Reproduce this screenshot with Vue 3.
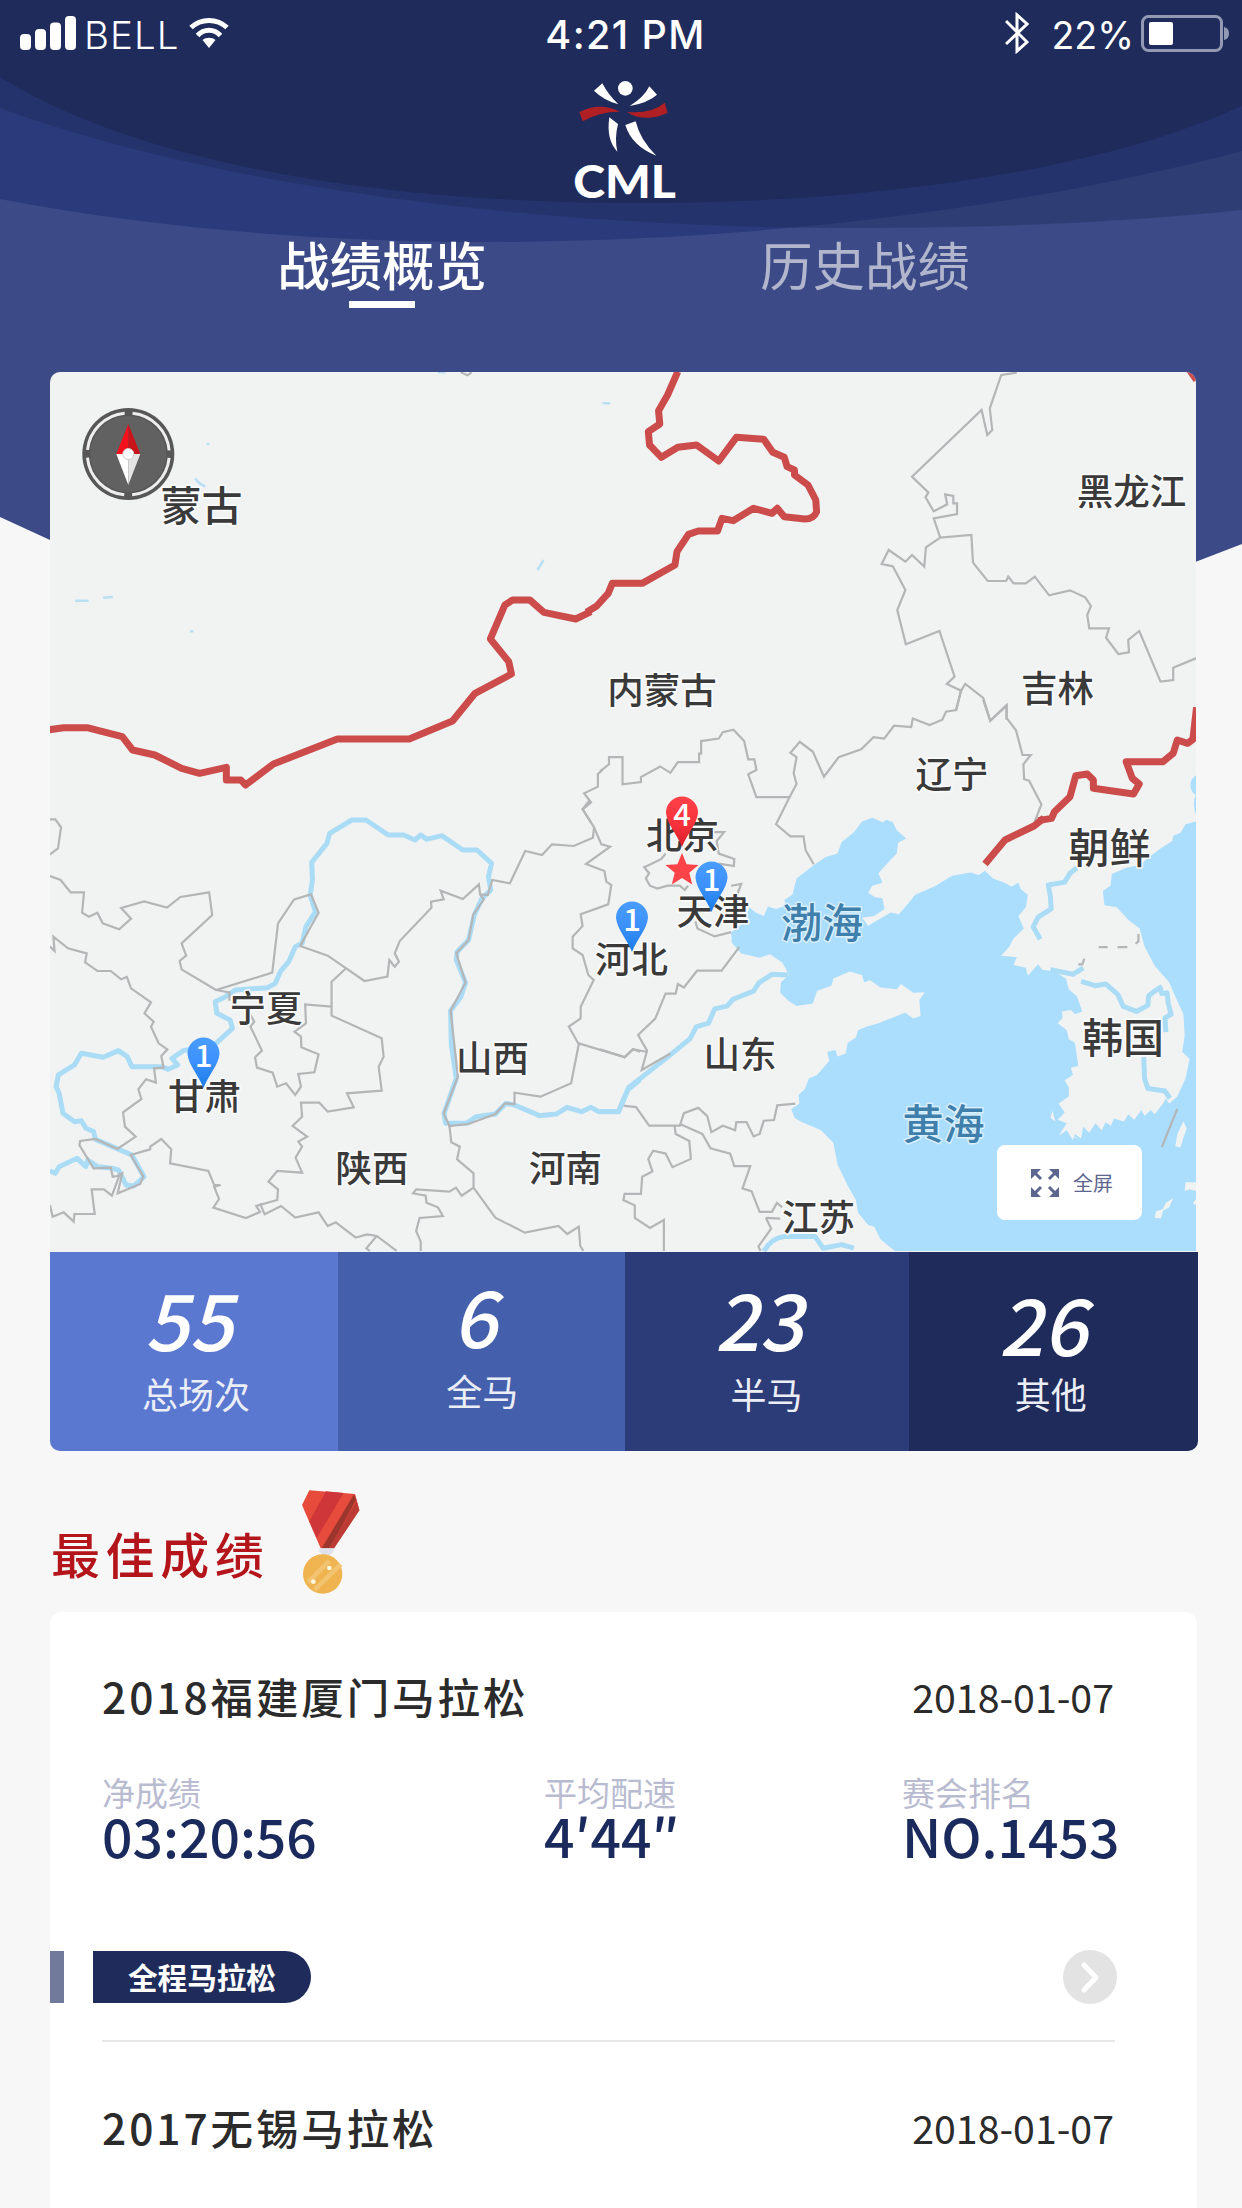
<script setup>
const labels = [
  { t: '蒙古', x: 201.5, y: 505.5, s: 41 },
  { t: '黑龙江', x: 1131.5, y: 491, s: 36.5 },
  { t: '内蒙古', x: 662, y: 690, s: 36.5 },
  { t: '吉林', x: 1057.5, y: 688, s: 36.5 },
  { t: '辽宁', x: 952, y: 774.5, s: 36.5 },
  { t: '北京', x: 682.5, y: 835, s: 36.5 },
  { t: '天津', x: 713, y: 911.5, s: 36.5 },
  { t: '河北', x: 631.5, y: 959, s: 36.5 },
  { t: '渤海', x: 822, y: 922.5, s: 41, c: 'sea' },
  { t: '朝鲜', x: 1109.5, y: 848, s: 41 },
  { t: '韩国', x: 1123, y: 1038, s: 41 },
  { t: '山东', x: 740, y: 1054.5, s: 36.5 },
  { t: '黄海', x: 943.5, y: 1123.5, s: 41, c: 'sea' },
  { t: '江苏', x: 818.5, y: 1217.5, s: 36.5 },
  { t: '宁夏', x: 266, y: 1008, s: 36.5 },
  { t: '甘肃', x: 204.5, y: 1096, s: 36.5 },
  { t: '山西', x: 492.5, y: 1058, s: 36.5 },
  { t: '陕西', x: 372, y: 1168, s: 36.5 },
  { t: '河南', x: 565.5, y: 1168, s: 36.5 },
]

const pins = [
  { n: 4, x: 682, y: 812, fill: 'url(#pinRed)' },
  { n: 1, x: 711.5, y: 877, fill: 'url(#pinBlue)' },
  { n: 1, x: 632, y: 917, fill: 'url(#pinBlue)' },
  { n: 1, x: 203.5, y: 1053, fill: 'url(#pinBlue)' },
]

const stats = [
  { value: '55', label: '总场次', cls: 'total' },
  { value: '6', label: '全马', cls: 'full' },
  { value: '23', label: '半马', cls: 'half' },
  { value: '26', label: '其他', cls: 'other' },
]
</script>

<template>
  <div class="screen">
    <svg class="backdrop" width="1242" height="800" viewBox="0 0 1242 800">
      <path fill="#3c4b88" d="M0 0H1242V544L598 792L0 517Z" />
      <path fill="#2a3a7a" d="M0 0V199C160 230 340 242 480 242C740 242 1010 212 1242 151V0Z" />
      <path fill="#1e2b5b" fill-opacity=".42" d="M0 0V108C230 192 560 228 850 228C1000 228 1130 222 1242 210V0Z" />
      <path fill="#1e2b5b" d="M0 0V77C150 170 400 203 640 203C860 203 1090 175 1242 106V0Z" />
    </svg>

    <header class="status">
      <div class="status-side">
        <svg width="56" height="34" viewBox="0 0 56 34" fill="#fff">
          <rect x="0" y="18" width="11" height="16" rx="4" />
          <rect x="15" y="13" width="11" height="21" rx="4" />
          <rect x="30" y="6.500" width="11" height="27.500" rx="4" />
          <rect x="45" y="0" width="11" height="34" rx="4" />
        </svg>
        <span class="carrier">BELL</span>
        <svg class="wifi" width="40" height="32" viewBox="0 0 40 32" fill="none" stroke="#fff" stroke-width="5">
          <path d="M2 10.500C12 1 28 1 38 10.500" />
          <path d="M8.500 18.500C15 11.500 25 11.500 31.500 18.500" />
          <path fill="#fff" stroke="none" d="M13.500 23C17 20 23 20 26.500 23L20 31Z" />
        </svg>
      </div>
      <div class="clock">4:21 PM</div>
      <div class="status-side end">
        <svg width="24" height="42" viewBox="0 0 24 42" fill="none" stroke="#fff" stroke-width="3">
          <path d="M1 9L22 30L12 39V3L22 12L1 32" />
        </svg>
        <span class="charge">22%</span>
        <svg class="battery" width="89" height="37" viewBox="0 0 89 37">
          <rect x="1.500" y="1.500" width="79" height="34" rx="6" fill="none" stroke="#9299b3" stroke-width="3" />
          <rect x="8" y="7" width="24" height="23" rx="2" fill="#fff" />
          <path d="M83 12Q88 13 88 18.500Q88 24 83 25Z" fill="#9299b3" />
        </svg>
      </div>
    </header>

    <div class="brand">
      <svg width="200" height="150" viewBox="0 0 600 450">
        <g fill="#fff">
          <circle cx="316" cy="85" r="22" />
          <path d="M247 70L222 92Q250 120 295 133Q265 105 247 70Z" />
          <path d="M388 79L411 104Q385 128 329 138Q372 112 388 79Z" />
          <path d="M268 172L294 192Q283 235 292 275Q258 240 268 172Z" />
          <path d="M316 195L347 184Q360 240 409 287Q335 258 316 195Z" />
        </g>
        <path fill="#b01f24" d="M178 156Q240 125 300 155Q240 154 188 184Z" />
        <path fill="#b01f24" d="M434 128L443 158Q375 190 320 156Q395 162 434 128Z" />
        <text x="160" y="413" class="logo-text" textLength="308" lengthAdjust="spacingAndGlyphs">CML</text>
      </svg>
    </div>

    <nav class="tabs">
      <div class="tab active"><span>战绩概览</span><i></i></div>
      <div class="tab"><span>历史战绩</span></div>
    </nav>

    <section class="overview">
      <div class="map">
        <svg width="1146" height="880" viewBox="50 372 1146 880">
          <defs>
            <linearGradient id="pinRed" x1="0" y1="0" x2="0" y2="1">
              <stop offset="0" stop-color="#ff4148" /><stop offset=".55" stop-color="#f7323b" /><stop offset="1" stop-color="#d91e2a" />
            </linearGradient>
            <linearGradient id="pinBlue" x1="0" y1="0" x2="0" y2="1">
              <stop offset="0" stop-color="#4a9dff" /><stop offset=".5" stop-color="#3b90fb" /><stop offset="1" stop-color="#1a7ce6" />
            </linearGradient>
          </defs>
          <rect x="50" y="372" width="1146" height="880" fill="#f1f3f3" />

          <!-- seas, islands and the rivers of the east -->
          <g transform="translate(600 700) scale(.40944 .35714)">
            <path fill="#abdefd" d="M1457 340L1430 348L1418 372L1400 380L1398 395L1370 415L1340 440L1320 462L1285 470L1250 487L1247 520L1228 535L1232 575L1262 580L1290 615L1318 640L1330 690L1355 745L1390 790L1405 830L1425 880L1428 940L1422 985L1440 1005L1430 1060L1410 1110L1390 1130L1382 1115L1375 1130L1355 1160L1345 1148L1330 1165L1322 1148L1305 1175L1290 1160L1280 1180L1255 1172L1248 1192L1235 1182L1225 1205L1210 1185L1195 1212L1180 1195L1175 1228L1160 1215L1155 1232L1140 1205L1120 1220L1140 1185L1118 1175L1135 1155L1120 1130L1145 1110L1145 1085L1135 1065L1155 1050L1150 1030L1168 1025L1160 960L1145 950L1140 925L1118 905L1130 890L1128 872L1150 868L1160 880L1178 872L1165 830L1145 810L1138 780L1110 760L1080 755L1070 740L1045 772L1040 750L1010 742L1018 720L980 716L1000 690L1010 668L1035 640L1022 605L1040 580L1045 545L1028 530L1022 512L1005 522L985 510L960 500L940 478L925 490L905 483L860 492L820 520L770 545L745 580L730 600L710 595L685 612L655 632L640 610L670 605L695 585L690 555L672 552L655 540L665 520L690 512L680 485L700 460L725 430L728 400L748 388L725 365L715 342L700 335L690 342L665 330L640 340L620 370L590 398L580 430L550 440L525 460L480 500L470 545L450 560L455 575L430 585L410 578L400 605L380 595L365 580L355 612L340 635L320 650L322 680L345 710L390 722L415 712L445 735L462 770L442 790L440 820L460 842L480 857L520 850L530 815L565 800L570 780L610 760L640 770L645 790L660 785L685 805L725 810L735 795L765 820L793 818L780 840L783 885L765 892L745 875L725 885L680 905L650 915L630 925L625 945L605 960L600 990L580 998L575 980L555 985L560 1010L530 1050L510 1060L500 1090L485 1105L487 1130L467 1145L475 1170L490 1180L540 1205L570 1240L580 1300L605 1360L625 1400L630 1435L655 1470L670 1475L685 1510L720 1543H1457Z" />
            <path fill="#abdefd" d="M1457 210Q1442 220 1442 240Q1444 260 1455 265Q1445 290 1457 325Z" />
            <g fill="#f1f3f3">
              <path d="M1425 1180L1433 1200L1425 1225L1418 1252L1405 1250L1410 1215Z" />
              <path d="M1430 1350H1457V1375L1440 1370L1428 1375Z" />
              <path d="M1400 1395L1390 1420L1375 1430L1370 1452L1355 1450L1358 1432L1375 1425L1382 1408Z" />
              <path d="M1457 1395L1448 1410L1457 1415Z" />
              <path d="M1150 1215L1172 1232L1160 1225Z M1105 1150L1112 1180L1100 1170Z" />
            </g>
            <g class="river thin">
              <path d="M1165 470L1148 485L1135 510L1095 518L1100 550L1102 585L1070 608L1058 635L1075 670" />
              <path d="M1100 755L1155 768L1180 750M1175 788L1210 800L1235 795L1265 825L1278 858L1310 872L1338 855L1340 828L1355 815L1368 805L1372 822L1385 820L1388 850L1395 880L1380 890L1382 930M1328 1000L1330 1060L1338 1088L1380 1095L1392 1115" />
              <path d="M400 1543Q420 1505 450 1502L525 1502L545 1535L590 1525L620 1535" />
            </g>
            <path class="river" d="M460 770L420 768L388 792L375 815L325 838L310 857L280 865L265 905L235 915L220 948L165 1000L70 1085L45 1152L0 1152" />
            <g class="province">
              <path d="M0 200L22 180V160H55V236L100 230V216L147 186L172 204L190 174H242V150H247V115L290 108L300 90L326 83L352 115L362 166H377L382 196L362 208L382 272H463L430 348L465 382H497L502 420L522 460" />
              <path d="M463 272L480 235L473 205L480 160L465 148L488 117L520 145L547 215L583 160L638 138L668 104L694 108L718 72L760 76L764 52L805 70L836 55L845 33L870 28L882 -28" />
              <path d="M936 0L953 58L993 14V50L1016 85L1032 154H1052L1034 180L1036 222L1048 226L1078 292L1062 340" />
              <path d="M270 370H303L285 395L290 430L328 445L327 465L290 458M120 462L150 445L160 430M120 462L108 468L120 485L112 500L122 520L140 528L165 520L195 520L207 532L215 520M320 520L345 515L335 545M233 620L238 640L280 662L320 650" />
              <path d="M340 692L297 758H237L205 805L190 795L185 822H160L135 892L93 938L115 982L102 1036L172 990M0 978L60 1000L80 978L112 985" />
              <path d="M52 1130L50 1135L88 1140L120 1192H195L205 1157L240 1142L262 1165L272 1210L300 1192L330 1205L333 1182H358L375 1222L390 1215L400 1178L425 1176L433 1135L477 1130" />
              <path d="M182 1192L185 1215L218 1235L222 1285L177 1308L160 1270L130 1262L118 1285L128 1320L103 1335L100 1383H60L57 1400L85 1415V1450L122 1478L156 1456V1543" />
              <path d="M195 1187L250 1215L270 1255L318 1270L328 1305H367L348 1368L370 1375L390 1433H420L432 1408L445 1420M405 1450L440 1452M405 1450L418 1480L387 1530L392 1543" />
              <path d="M1218 692H1240M1264 692H1288M1308 682L1315 676V655M1168 740H1178L1183 724M1410 1145L1372 1252" />
            </g>
          </g>

          <!-- west: yellow river and provinces -->
          <g transform="translate(40 800) scale(.38265 .33333)">
            <path class="river" d="M1568 840L1537 868L1512 935H1460L1440 922L1415 935L1377 922L1350 942L1305 947L1240 915L1218 910L1190 942L1140 950L1115 970L1060 970L1056 940L1088 835L1075 735L1073 632L1100 590L1112 548L1088 480L1090 455L1120 420L1135 345L1155 295L1178 270L1172 230L1180 190L1142 150L1105 150L1050 107L1010 118L995 105L980 120L950 105H910L852 60H815L757 100L750 130L710 187L712 240L706 285L720 335L695 380L685 430L667 440L650 485L628 515L615 550L595 563L510 570L485 590L458 605L462 640L497 660L503 685L460 730L375 752L345 775L360 795L335 808L318 800L240 800L228 770L205 752L165 772L108 760L90 795L48 825L42 860L50 880L60 940L90 965L108 962L120 985L140 995L145 1018L200 1045L240 1065L272 1130L245 1158L225 1155L205 1110L190 1105L150 1100L125 1080L120 1100L97 1075L50 1100L40 1120L26 1112" />
            <g class="province">
              <path d="M1437 0L1418 27L1448 82L1445 113L1395 138L1338 133L1312 165L1268 153L1228 250L1182 240L1170 285L1150 283L1147 253L1105 297L1047 272L1055 298L1022 305L1023 323L940 423L927 460L938 485L927 500L913 480L908 530L848 543L752 467L680 438L728 338L708 283L664 298L622 370L607 518L460 570L370 508L365 483L382 467L370 430L450 345L442 277L367 291L332 323L272 304L212 324L238 356L207 388L164 370L150 338L128 350L110 338L115 277H80L54 240L26 228" />
              <path d="M26 58H40L55 82L47 145L26 163M1448 82L1467 133L1490 140L1427 192L1475 213L1480 245L1493 255L1485 313L1413 343L1418 378L1392 410V445L1418 465L1433 525L1447 540L1413 620V655L1382 680L1408 733L1388 850L1308 890L1240 878V912L1215 910L1190 942L1120 972L1070 978L1055 940L1092 830L1073 632L1112 548L1088 460L1120 420L1132 345L1160 298L1150 283" />
              <path d="M1408 730L1528 772L1550 748L1568 755" />
              <path d="M26 440L38 453L35 410L73 445L122 460L118 487L150 513H185L212 538L227 531L238 565L290 607L273 640L297 665L290 680L310 730L333 748L317 768L323 803L298 805L303 848L277 838L257 868L265 897L217 937L222 980L250 1010L202 1047L145 1017L105 1023L103 1035L140 1105L185 1103L190 1130L202 1128L215 1120L203 1180L262 1152L270 1130L237 1065L288 1048V1040L317 1017L343 1048L340 1090L440 1113L455 1155H472L455 1160L468 1197L453 1223L538 1254L575 1236L565 1218L620 1200L622 1168L597 1145L620 1113L685 1118L668 1073L685 1040L675 1025L698 1010L660 978L685 950L682 908H730L752 935L820 922L802 880L893 872L885 800L898 770L893 715L762 647V545L798 507M762 620L693 613L695 670L665 695L682 710L683 742L728 763L717 817L675 822L682 860L667 885L643 850L620 860L608 818L567 803L562 772L580 752L550 680L560 665L545 635" />
              <path d="M460 570L495 577V602M26 1215L33 1250L62 1237L88 1265L90 1242H143L135 1168H167L188 1187L210 1118M575 1210L587 1243L630 1218L667 1253L728 1237L752 1278L773 1267L825 1313L855 1303L880 1308L932 1353M880 1308L853 1345L862 1353" />
              <path d="M1070 978L1075 1027L1097 1040L1090 1078L1133 1120V1163L1102 1187L1087 1163L1070 1175L983 1168L975 1180L1008 1187L1010 1208L1040 1222L1053 1248L992 1254L983 1293L995 1325V1353M1133 1163L1190 1253L1267 1298L1355 1278L1378 1302L1408 1280L1412 1338L1420 1353" />
            </g>
          </g>

          <!-- north-east provinces and national border -->
          <g transform="translate(600 370) scale(.40944 .33333)">
            <g class="province">
              <path d="M1018 8L980 15L952 115L958 180L946 195L932 120L762 320L802 367L795 382L815 424L848 403L843 373L863 378V400H872V432L815 445L831 503L907 495L911 578L947 633H992L997 620L1010 640H1040L1062 620L1097 676L1148 661L1185 682L1199 708L1190 735L1195 775H1243L1236 803L1266 852L1292 847L1290 810L1317 783L1369 935L1400 930V893L1457 864" />
              <path d="M831 503L796 532L792 590L762 555L746 575L705 540L688 582L715 589L746 660L726 720L747 823L829 783L866 920L847 942L882 962L870 1018M882 962L892 942L936 984L953 1052L993 1007V1050" />
            </g>
            <path class="border" d="M190 5L165 75L143 122L146 162L118 185L121 225L150 262L190 232L236 225L290 273L333 202L400 208L422 247L450 262L457 290L475 300V315L508 345L527 390L529 425Q522 447 500 447L450 440L433 415L420 430L375 415L325 452L298 445L287 483H240L216 493L188 545L183 585L103 640H30L20 670L-8 708L-33 727" />
            <path class="border" d="M1457 1012L1448 1108L1435 1120L1410 1110L1400 1150L1375 1175H1285L1300 1225L1317 1242L1303 1272L1205 1255V1230L1190 1212L1162 1217L1148 1280L1110 1325L1103 1345L1070 1352" />
            <path class="border" d="M1440 0L1457 30" />
          </g>
          <path class="border" d="M1044 818L1034 826L1005 840L985 864" />
          <g transform="translate(40 370) scale(.38265 .33333)">
            <path class="border" d="M1440 725L1400 747L1317 727L1280 690H1235L1215 705L1177 807L1225 875L1232 912L1137 970L1078 1053L965 1107H777L610 1182L537 1245L525 1230H487V1192L417 1210L370 1195L300 1155L242 1140L215 1100L123 1073H62L20 1080" />
            <g class="province">
              <path d="M1470 1200L1458 1212V1250L1422 1270L1440 1297L1418 1318L1440 1358M1100 7L1117 16L1128 7" />
            </g>
            <g class="lake">
              <path d="M92 692H127M165 683L190 681M1470 100H1490M1300 600L1316 570M405 325L415 338L432 350M435 222H443M392 784H401M1040 7H1060" />
            </g>
          </g>

          <text
            v-for="l in labels"
            :key="l.t"
            class="place"
            :class="l.c"
            :x="l.x"
            :y="l.y + l.s * 0.375"
            :font-size="l.s"
          >{{ l.t }}</text>

          <path
            d="M682 853L686.600 864.200L698.500 865L689.300 872.700L692.200 884.500L682 878L671.800 884.500L674.700 872.700L665.500 865L677.400 864.200Z"
            fill="#fb4348"
          />
          <g v-for="p in pins" :key="p.x" :transform="`translate(${p.x} ${p.y})`">
            <path d="M-16 1A16 16.500 0 1 1 16 1C15 12 5 22 0 35C-5 22 -15 12 -16 1Z" :fill="p.fill" />
            <text class="pin-number" x="0" y="14">{{ p.n }}</text>
          </g>

          <g transform="translate(128.300 454)">
            <circle r="46" fill="#575757" />
            <circle r="38" fill="#616161" />
            <circle r="41" fill="none" stroke="#eee" stroke-width="3" stroke-dasharray="56.400 8" stroke-dashoffset="-4" />
            <path d="M0 -30L-12 0H0Z" fill="#f5111b" /><path d="M0 -30L12 0H0Z" fill="#c9141b" />
            <path d="M0 31L-12 0H0Z" fill="#fff" /><path d="M0 31L12 0H0Z" fill="#e4e4e4" />
            <circle r="5.500" fill="#fff" stroke="#ccc" stroke-width="1" />
          </g>
        </svg>
        <button class="fullscreen">
          <svg width="28" height="28" viewBox="0 0 28 28" fill="#5d668f" stroke="#5d668f" stroke-width="3">
            <path d="M3 3L10 10M25 3L18 10M3 25L10 18M25 25L18 18" />
            <path stroke="none" d="M0 0H10L0 10ZM28 0V10L18 0ZM0 28V18L10 28ZM28 28H18L28 18Z" />
          </svg>
          <span>全屏</span>
        </button>
      </div>
      <div class="stats">
        <div v-for="s in stats" :key="s.label" class="stat" :class="s.cls">
          <b>{{ s.value }}</b>
          <span>{{ s.label }}</span>
        </div>
      </div>
    </section>

    <div class="section-title">
      <h2>最佳成绩</h2>
      <svg width="60" height="106" viewBox="60 58 180 318">
        <path fill="#e64b3b" d="M88 62L225 73L238 122L162 236H122L66 106Z" />
        <path fill="#cf3639" d="M138 65L191 70L110 205L88 155Z" />
        <path fill="#9c352c" d="M222 74L228 90L150 236H125Z" />
        <path fill="#bd3b35" d="M225 73L238 122L162 236H146L229 95Z" />
        <path fill="#dfe2ea" d="M118 236H160V246L150 256H128L118 246Z" />
        <circle cx="128" cy="313" r="59" fill="#efb34f" />
        <path stroke="#f3c46f" stroke-width="14" d="M84 338L148 274M104 360L182 284" />
        <circle cx="148" cy="295" r="7" fill="#fff8e0" /><circle cx="100" cy="336" r="7" fill="#fff8e0" />
      </svg>
    </div>

    <section class="card">
      <div class="race-head"><h3>2018福建厦门马拉松</h3><time>2018-01-07</time></div>
      <div class="metrics">
        <div class="metric net"><span>净成绩</span><b>03:20:56</b></div>
        <div class="metric pace"><span>平均配速</span><b>4′44″</b></div>
        <div class="metric"><span>赛会排名</span><b>NO.1453</b></div>
      </div>
      <div class="race-foot">
        <i class="strip"></i>
        <span class="tag">全程马拉松</span>
        <svg class="more" width="54" height="54" viewBox="0 0 54 54">
          <circle cx="27" cy="27" r="27" fill="#e3e3e3" />
          <path d="M21 15L33 27.500L21 40" fill="none" stroke="#fff" stroke-width="5" stroke-linecap="round" stroke-linejoin="round" />
        </svg>
      </div>
      <hr />
      <div class="race-head second"><h3>2017无锡马拉松</h3><time>2018-01-07</time></div>
    </section>
  </div>
</template>

<style>
body {
  background: #f7f7f7;
}
</style>

<style scoped>
.screen {
  position: relative;
  width: 1242px;
  height: 2208px;
  overflow: hidden;
  display: flex;
  flex-direction: column;
  background: #f7f7f7;
  font-family: "Noto Sans CJK SC", sans-serif;
}
.screen * {
  box-sizing: border-box;
}
.backdrop {
  position: absolute;
  left: 0;
  top: 0;
}
.status,
.brand,
.tabs,
.overview {
  position: relative;
}
svg {
  display: block;
  flex: none;
}
.status {
  height: 66px;
  padding: 0 12px 0 20px;
  display: grid;
  grid-template-columns: 1fr auto 1fr;
  align-items: center;
  color: #fff;
  font-family: Inter, sans-serif;
  font-size: 38.5px;
}
.status-side {
  display: flex;
  align-items: center;
}
.status-side.end {
  justify-content: flex-end;
}
.carrier {
  margin: 3px 0 0 8px;
  font-weight: 300;
  letter-spacing: 1px;
}
.wifi {
  margin-left: 10px;
}
.clock {
  margin: 3px 0 0 1px;
  font-size: 39.5px;
  font-weight: 500;
  letter-spacing: 1.4px;
}
.charge {
  margin: 4px 7px 0 22px;
  font-size: 37.5px;
}
.brand {
  height: 150px;
  margin-top: -6px;
  padding-left: 520px;
}
.logo-text {
  font-family: Lato, sans-serif;
  font-weight: 900;
  font-size: 136px;
  fill: #fff;
}
.tabs {
  height: 162px;
  display: flex;
  padding: 15px 0 0 277px;
  gap: 273px;
  font-size: 52.4px;
  line-height: 76px;
  color: #b1b6cd;
}
.tab {
  width: 210px;
  display: flex;
  flex-direction: column;
  align-items: center;
}
.active {
  color: #fff;
  font-weight: 500;
}
.tab i {
  width: 66px;
  height: 7px;
  background: #fff;
}
.overview {
  width: 1148px;
  margin-left: 50px;
}
.map {
  position: relative;
  width: 1146px;
  height: 880px;
  overflow: hidden;
  border-radius: 10px 10px 0 0;
}
.province {
  fill: none;
  stroke: #b4b5b6;
}
.river {
  fill: none;
  stroke: #abdcf6;
}
.lake {
  fill: none;
  stroke: #b9dff3;
}
.border {
  fill: none;
  stroke: #cc4c4c;
  stroke-width: 7;
  stroke-linejoin: round;
  vector-effect: non-scaling-stroke;
}
.province path {
  stroke-width: 2.2;
  vector-effect: non-scaling-stroke;
}
path.river,
.river path {
  stroke-width: 5;
  stroke-linejoin: round;
  vector-effect: non-scaling-stroke;
}
.lake path {
  stroke-width: 2.5;
  vector-effect: non-scaling-stroke;
}
.place {
  text-anchor: middle;
  fill: #3a3a3a;
  font-weight: 500;
  stroke: #fafbfb;
  stroke-width: 3px;
  paint-order: stroke;
  stroke-linejoin: round;
}
.sea {
  fill: #3f7fab;
  stroke: #d9effc;
}
.pin-number {
  text-anchor: middle;
  fill: #fff;
  font-size: 31px;
  font-weight: 500;
}
.fullscreen {
  position: absolute;
  right: 54px;
  bottom: 32px;
  width: 145px;
  height: 75px;
  padding: 0 0 0 34px;
  display: flex;
  align-items: center;
  gap: 14px;
  border: 0;
  border-radius: 8px;
  background: #fff;
  color: #5d668f;
  font: 20px "Noto Sans CJK SC", sans-serif;
}
.stats {
  height: 199px;
  display: flex;
  overflow: hidden;
  border-radius: 0 0 10px 10px;
}
.stat {
  flex: 1;
  display: flex;
  flex-direction: column;
  align-items: center;
  padding-top: 18px;
  color: #fff;
}
.stat b {
  height: 95px;
  line-height: 95px;
  font-size: 78px;
  font-weight: 500;
  transform: skewX(-12deg);
}
.stat span {
  margin-top: 1px;
  font-size: 36px;
  line-height: 54px;
  color: #eceef7;
}
.total {
  background: #5b78d0;
  padding-left: 4px;
}
.full {
  background: #445fab;
  padding: 15px 0 0 2px;
}
.half {
  background: #2c3c78;
}
.other {
  background: #1e2b5b;
  padding-right: 5px;
}
.other b {
  position: relative;
  top: 5px;
}
.section-title {
  height: 161px;
  padding: 38px 0 0 51px;
  display: flex;
  gap: 31px;
}
h2,
h3 {
  margin: 0;
  font-weight: 400;
}
h2 {
  margin-top: 28px;
  font-size: 49px;
  line-height: 72px;
  letter-spacing: 5.6px;
  font-weight: 500;
  color: #b4151b;
}
.card {
  flex: 1;
  width: 1147px;
  margin-left: 50px;
  padding-top: 50px;
  border-radius: 12px 12px 0 0;
  background: #fff;
}
.race-head {
  height: 66px;
  padding: 0 83px 0 52px;
  display: flex;
  justify-content: space-between;
  align-items: center;
  color: #2b2b2b;
}
h3 {
  font-size: 42.5px;
  letter-spacing: 2.9px;
  font-weight: 500;
}
time {
  font-size: 39.3px;
  font-weight: 400;
}
.metrics {
  display: flex;
  padding: 42px 0 0 52px;
}
.metric {
  display: flex;
  flex-direction: column;
}
.net {
  width: 442px;
}
.pace {
  width: 358px;
}
.metric span {
  font-size: 33px;
  line-height: 44px;
  color: #b9bbd0;
}
.metric b {
  font-size: 53.5px;
  line-height: 42px;
  font-weight: 500;
  color: #1b2a5c;
}
.race-foot {
  margin-top: 94px;
  padding-right: 80px;
  display: flex;
  align-items: center;
}
.strip {
  width: 14px;
  height: 52px;
  background: #727a9c;
}
.tag {
  width: 218px;
  height: 52px;
  margin-left: 29px;
  padding-left: 35px;
  border-radius: 0 26px 26px 0;
  background: #1e2b5b;
  color: #fff;
  font-size: 29.6px;
  line-height: 51px;
  font-weight: 700;
}
.more {
  margin-left: auto;
}
hr {
  height: 2px;
  margin: 36px 82px 0 52px;
  border: 0;
  background: #e8e8e8;
}
.second {
  margin-top: 51px;
}
</style>
